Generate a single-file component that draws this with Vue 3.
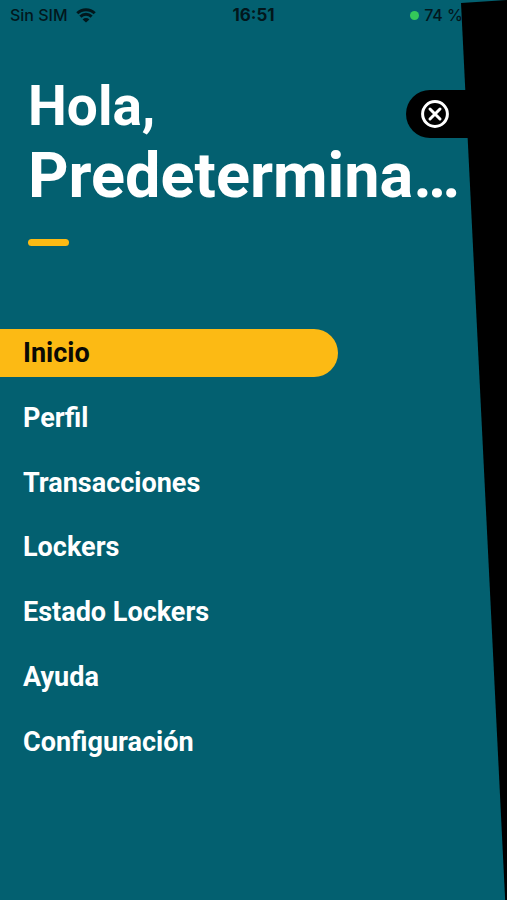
<script setup>
import { ref } from 'vue'

const items = ['Inicio', 'Perfil', 'Transacciones', 'Lockers', 'Estado Lockers', 'Ayuda', 'Configuración']
const active = ref('Inicio')
</script>

<template>
  <main class="drawer">
    <header class="status">
      <span class="carrier">
        Sin SIM
        <svg class="wifi" viewBox="0 0 20 15" aria-hidden="true">
          <path d="M1.3 5.2a12.4 12.4 0 0 1 17.4 0" />
          <path d="M4.4 8.6a8 8 0 0 1 11.2 0" />
          <path class="dot" d="M10 14.6 6.6 11.4a4.8 4.8 0 0 1 6.8 0z" />
        </svg>
      </span>
      <time class="clock">16:51</time>
      <span class="battery"><i class="live"></i>74 %</span>
    </header>

    <div class="page-edge" aria-hidden="true"></div>
    <button class="close" type="button" aria-label="Cerrar">
      <svg viewBox="0 0 28 28" aria-hidden="true">
        <circle cx="14" cy="14" r="12.4" />
        <path d="m9 9 10 10M19 9 9 19" />
      </svg>
    </button>

    <h1 class="greeting">
      <span class="hello">Hola,</span>
      <span class="name">Predetermina…</span>
    </h1>
    <div class="accent"></div>

    <nav class="menu">
      <a
        v-for="item in items"
        :key="item"
        href="#"
        class="item"
        :class="{ active: item === active }"
        @click.prevent="active = item"
      >{{ item }}</a>
    </nav>
  </main>
</template>

<style>
body {
  margin: 0;
  background: #036070;
}
</style>

<style scoped>
.drawer {
  position: relative;
  min-height: 100vh;
  overflow: hidden;
  background: #036070;
  color: #fff;
  font-family: Roboto, "Liberation Sans", sans-serif;
}

.status {
  display: grid;
  grid-template-columns: 1fr auto 1fr;
  align-items: center;
  height: 30px;
  padding: 0 10px;
  box-sizing: border-box;
  color: #02171c;
  font: 500 16px/20px Inter, sans-serif;
}

.carrier,
.battery {
  display: flex;
  align-items: center;
  white-space: nowrap;
}

.carrier {
  gap: 8px;
}

.wifi {
  width: 20px;
  height: 15px;
  fill: none;
  stroke: currentColor;
  stroke-width: 3;
}

.wifi .dot {
  fill: currentColor;
  stroke: none;
}

.clock {
  font-size: 17px;
  font-weight: 700;
}

.battery {
  justify-content: flex-end;
  gap: 5px;
  padding-right: 34px;
}

.live {
  width: 9px;
  height: 9px;
  border-radius: 50%;
  background: #34c85a;
}

.page-edge {
  position: absolute;
  inset: 0 0 0 auto;
  width: 46px;
  background: #000;
  clip-path: polygon(0 3px, 100% 0, 100% 100%, 96% 100%);
}

.close {
  position: absolute;
  top: 90px;
  right: 0;
  display: flex;
  align-items: center;
  width: 101px;
  height: 48px;
  padding: 0 0 0 15px;
  border: 0;
  border-radius: 24px 0 0 24px;
  background: #000;
  cursor: pointer;
}

.close svg {
  width: 28px;
  height: 28px;
  fill: none;
  stroke: #fff;
  stroke-width: 3;
  stroke-linecap: round;
}

.greeting {
  margin: 41px 0 0;
  padding-left: 28px;
  font-weight: 700;
}

.greeting span {
  display: block;
  white-space: nowrap;
}

.hello {
  font-size: 55px;
  line-height: 70px;
}

.name {
  font-size: 63px;
  line-height: 70px;
}

.accent {
  width: 41px;
  height: 7px;
  margin: 28px 0 0 28px;
  border-radius: 4px;
  background: #fcba14;
}

.menu {
  display: flex;
  flex-direction: column;
  justify-content: space-between;
  align-items: flex-start;
  height: 437px;
  margin-top: 83px;
}

.item {
  width: 66.7%;
  padding-left: 23px;
  box-sizing: border-box;
  border-radius: 0 24px 24px 0;
  color: #fff;
  font-size: 27px;
  font-weight: 700;
  line-height: 48px;
  text-decoration: none;
}

.item.active {
  background: #fcba14;
  color: #0a0a05;
}
</style>
